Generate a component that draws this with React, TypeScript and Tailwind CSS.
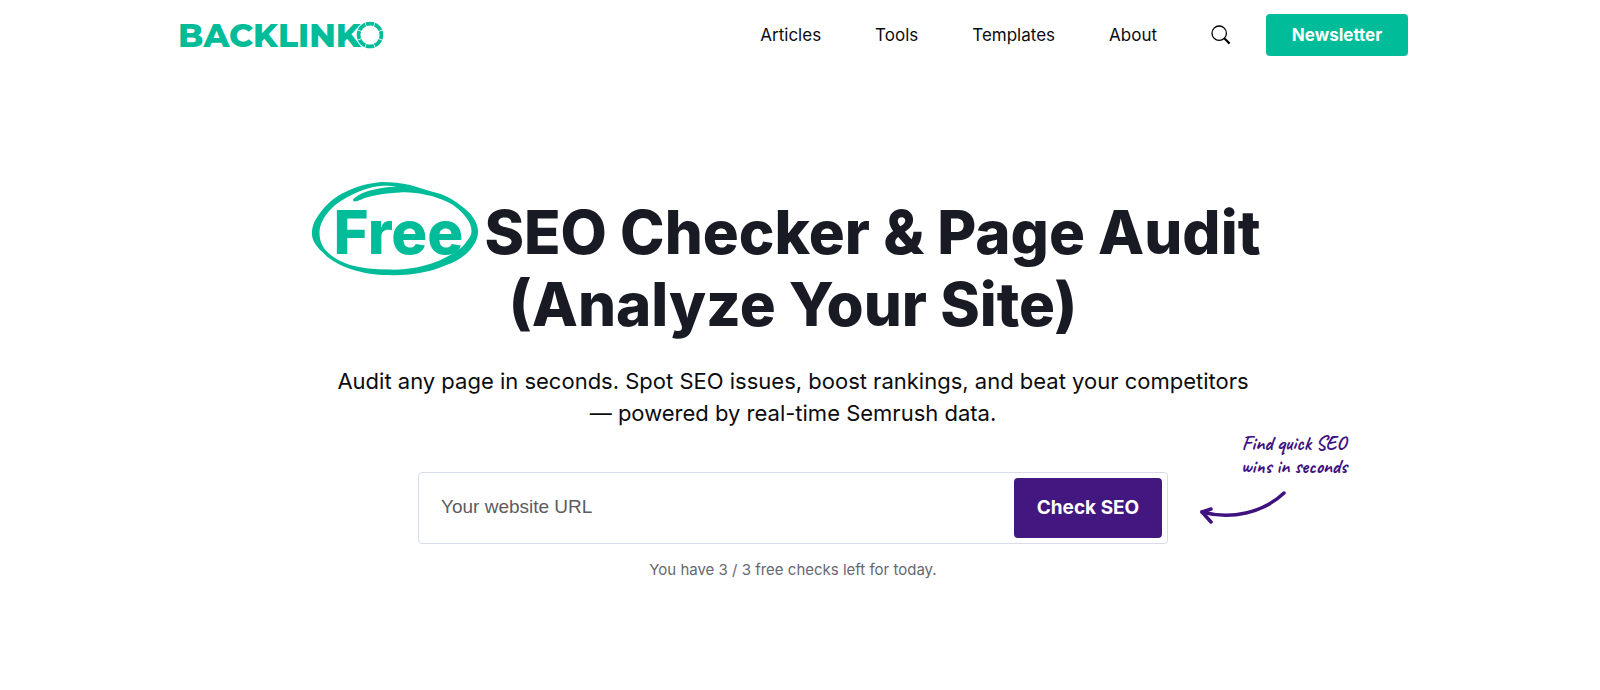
import React from "react";

const links = ["Articles", "Tools", "Templates", "About"];

function Logo() {
  return (
    <a href="#home" aria-label="Backlinko" className="flex items-center text-[#00bc98]">
      <span className="font-['Montserrat','Lato',sans-serif] text-[33px] leading-10 font-extrabold">BACKLINK</span>
      <svg className="-ml-[5px] size-7" viewBox="0 0 28 28" fill="none" aria-hidden="true">
        <circle cx="14" cy="14" r="14" fill="white" />
        <circle cx="14" cy="14" r="11.4" stroke="currentColor" strokeWidth="3.8" pathLength="80" strokeDasharray="9.2 0.8" strokeDashoffset="4.6" />
      </svg>
    </a>
  );
}

function Header() {
  return (
    <header className="mx-auto flex h-[70px] w-full max-w-[1230px] items-center justify-between">
      <Logo />
      <div className="flex items-center">
        <nav className="flex items-center gap-[54px] pt-0.5 text-[17px] text-[#0b0c10]">
          {links.map((label) => (
            <a key={label} href={`#${label.toLowerCase()}`}>{label}</a>
          ))}
        </nav>
        <button type="button" aria-label="Search" className="ml-[54px] text-black">
          <svg className="size-5" viewBox="0 0 20 20" fill="none" stroke="currentColor" aria-hidden="true">
            <circle cx="8.2" cy="8.2" r="7.2" strokeWidth="1.3" />
            <path d="M13.2 13.2L14.500 14.500" strokeWidth="1.3" />
            <path d="M13.8 13.8L18.6 18.6" strokeWidth="2.2" />
          </svg>
        </button>
        <a href="#newsletter" className="ml-[35px] flex h-[42px] w-[142px] items-center justify-center rounded-[4px] bg-[#00bc98] pt-0.5 text-[17px] font-bold text-white">
          Newsletter
        </a>
      </div>
    </header>
  );
}

function Scribble() {
  return (
    <svg className="absolute -top-3.5 -left-[22px] h-[94px] w-[168px]" viewBox="0 0 167 94" fill="#00bc98" aria-hidden="true">
      <path
        fillRule="evenodd"
        d="M70 0C80 0 90 1 98.500 3C107 5 113 8 122 10C132 12 141 17 148.500 23C154 27 159 31 162 36C165 41 167 46 166.500 51C166 57 163 63 158.500 68C152 75 144 80 135 83C126 87 116 90 105 91.500C96 93 86 93.500 77 93C64 93 52 91 42 88C30 84 19 79 12 71C5 65 1 59 0.500 53C0 45 3 38 8.500 31C15 22 24 14 35 9.500C46 4 58 1 70 0ZM8 51C8 59 11 66 17 71C22 76 30 80 38.500 83C50 86 63 87.500 77 87.500C87 88 96 87 105 85.500C116 83 126 80 135 75C143 71 151 66 155 59.500C158 56 160 53 160 49.500C160 44 158 40 155 36C150 29 143 23 135 19.500C129 17 122 14 115 13C106 11 97 10 88.500 10.500C78 11 68 12 58.500 14.500C52 16 48 19 43 19.500C41 19 41 17 43 16C48 12 53 10 58.500 8.500C67 6 76 5 85 4.500C80 3.500 74 3.500 68.500 4C59 5 50 8 42 12C33 16 25 21 18.500 28C12 35 8 43 8 51Z"
      />
    </svg>
  );
}

function Hint() {
  return (
    <div className="absolute -top-10 left-full ml-8 w-[152px] text-[#3f127f]">
      <p className="pl-9 font-['Caveat',cursive] text-[20px] leading-[23px] font-semibold whitespace-nowrap">
        Find quick SEO
        <br />
        wins in seconds
      </p>
      <svg className="mt-3 h-9 w-[88px]" viewBox="0 0 88 36" fill="none" stroke="currentColor" strokeWidth="3.5" strokeLinecap="round" strokeLinejoin="round" aria-hidden="true">
        <path d="M84 3C63 23 31 30 2 22" />
        <path d="M11 19L2 22L11 32" />
      </svg>
    </div>
  );
}

export default function App() {
  return (
    <div className="min-h-screen bg-white pr-3.5 font-['Inter',sans-serif]">
      <Header />
      <main className="flex flex-col items-center pt-[126px] text-center">
        <h1 className="text-[60px] leading-[72px] font-extrabold text-[#181b23]">
          <span className="relative mr-2 ml-2 inline-block text-[#00bc98]">
            Free
            <Scribble />
          </span>{" "}
          SEO Checker &amp; Page Audit
          <br />
          (Analyze Your Site)
        </h1>
        <p className="mt-[25px] text-[22px] leading-8 text-[#0b0c10]">
          Audit any page in seconds. Spot SEO issues, boost rankings, and beat your competitors
          <br />— powered by real-time Semrush data.
        </p>
        <div className="relative mt-[43px] w-full max-w-[750px]">
          <form onSubmit={(e) => e.preventDefault()} className="flex h-[72px] rounded-[4px] border border-[#d9dcec] p-[5px]">
            <input
              type="url"
              aria-label="Your website URL"
              placeholder="Your website URL"
              className="min-w-0 flex-1 bg-transparent pb-0.5 pl-[17px] font-['Liberation_Sans',sans-serif] text-[19px] text-[#333] outline-none placeholder:text-[#5c5c60]"
            />
            <button type="submit" className="w-[148px] rounded-[4px] bg-[#421780] text-[19px] font-bold text-white">
              Check SEO
            </button>
          </form>
          <Hint />
        </div>
        <p className="mt-3.5 text-[15px] leading-6 text-[#66686f]">You have 3 / 3 free checks left for today.</p>
      </main>
    </div>
  );
}
